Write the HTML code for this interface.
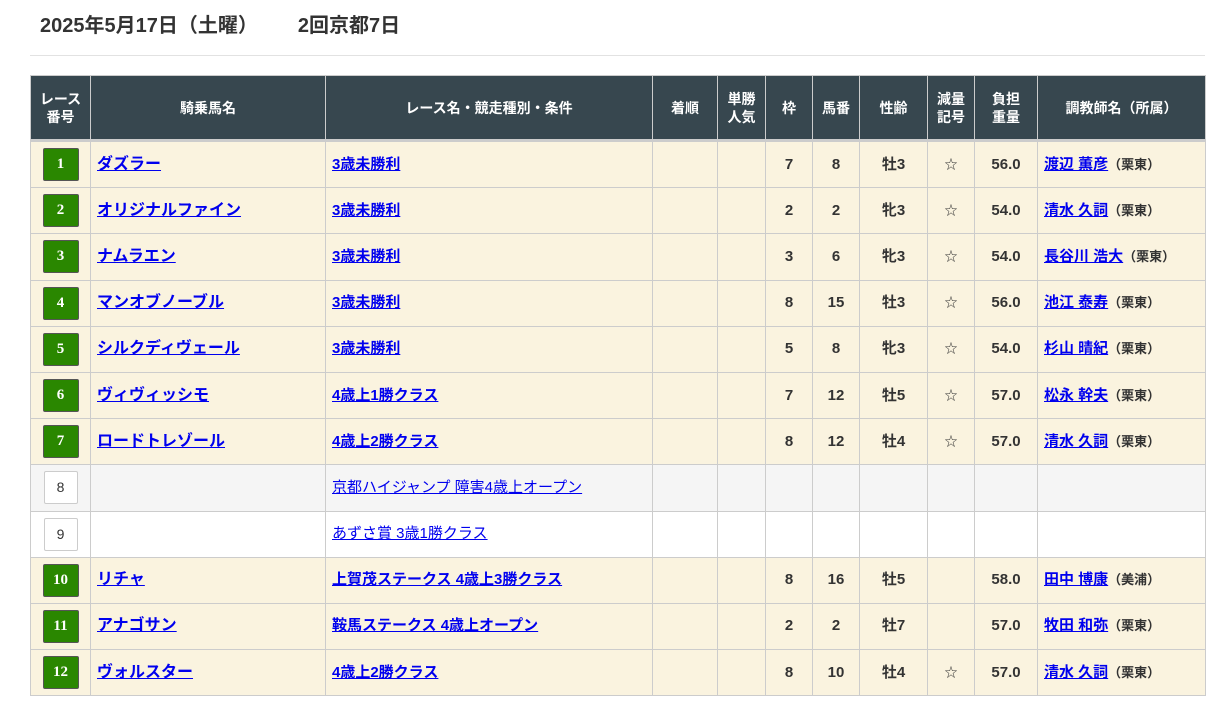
<!DOCTYPE html>
<html><head><meta charset="utf-8"><style>
body{margin:0;background:#fff;font-family:"Liberation Sans","Noto Sans CJK JP",sans-serif;color:#333;width:1222px;height:723px;overflow:hidden}
h1{position:absolute;left:40px;top:9px;margin:0;font-size:20px;font-weight:bold;color:#333;letter-spacing:0}
h1 span{margin-left:40px}
.hr{position:absolute;left:30px;top:55px;width:1175px;height:1px;background:#e2e2e2}
table{position:absolute;left:30px;top:75px;border-collapse:collapse;table-layout:fixed;width:1175px}
th{background:#37474f;color:#fff;font-size:14px;font-weight:bold;height:63px;border:1px solid #ccc;border-bottom:3px solid #ccc;line-height:18px;padding:0}
td{border:1px solid #ccc;height:45.2px;padding:0;font-size:15px;font-weight:bold;text-align:center;vertical-align:middle;background:#faf3df;line-height:20px}
td.l{text-align:left;padding-left:6px}
td.n{font-size:16px}
a{color:#0000ee;text-decoration:underline}
.b{display:inline-block;vertical-align:middle;width:34px;height:31px;line-height:31px;background:#2a8700;color:#fff;border:1px solid #555;border-radius:2px;font-family:"Liberation Serif",serif;font-size:15px}
tr.g td{background:#f5f5f5}tr.w td{background:#fff}
tr.g td,tr.w td{font-weight:normal}
.b2{display:inline-block;vertical-align:middle;width:32px;height:31px;line-height:31px;background:#fff;color:#333;border:1px solid #ccc;border-radius:2px;font-size:14px}
.s{font-size:13px}
.st{font-size:13px;font-weight:normal}
</style></head><body>
<h1>2025年5月17日（土曜）<span>2回京都7日</span></h1>
<div class="hr"></div>
<table>
<colgroup><col style="width:60px"><col style="width:235px"><col style="width:327px"><col style="width:65px"><col style="width:48px"><col style="width:47px"><col style="width:47px"><col style="width:68px"><col style="width:47px"><col style="width:63px"><col style="width:168px"></colgroup>
<tr><th>レース<br>番号</th><th>騎乗馬名</th><th>レース名・競走種別・条件</th><th>着順</th><th>単勝<br>人気</th><th>枠</th><th>馬番</th><th>性齢</th><th>減量<br>記号</th><th>負担<br>重量</th><th>調教師名（所属）</th></tr>
<tr><td><span class="b">1</span></td><td class="l n"><a>ダズラー</a></td><td class="l"><a>3歳未勝利</a></td><td></td><td></td><td>7</td><td>8</td><td>牡3</td><td class="st">☆</td><td>56.0</td><td class="l"><a>渡辺 薫彦</a><span class="s">（栗東）</span></td></tr>
<tr><td><span class="b">2</span></td><td class="l n"><a>オリジナルファイン</a></td><td class="l"><a>3歳未勝利</a></td><td></td><td></td><td>2</td><td>2</td><td>牝3</td><td class="st">☆</td><td>54.0</td><td class="l"><a>清水 久詞</a><span class="s">（栗東）</span></td></tr>
<tr><td><span class="b">3</span></td><td class="l n"><a>ナムラエン</a></td><td class="l"><a>3歳未勝利</a></td><td></td><td></td><td>3</td><td>6</td><td>牝3</td><td class="st">☆</td><td>54.0</td><td class="l"><a>長谷川 浩大</a><span class="s">（栗東）</span></td></tr>
<tr><td><span class="b">4</span></td><td class="l n"><a>マンオブノーブル</a></td><td class="l"><a>3歳未勝利</a></td><td></td><td></td><td>8</td><td>15</td><td>牡3</td><td class="st">☆</td><td>56.0</td><td class="l"><a>池江 泰寿</a><span class="s">（栗東）</span></td></tr>
<tr><td><span class="b">5</span></td><td class="l n"><a>シルクディヴェール</a></td><td class="l"><a>3歳未勝利</a></td><td></td><td></td><td>5</td><td>8</td><td>牝3</td><td class="st">☆</td><td>54.0</td><td class="l"><a>杉山 晴紀</a><span class="s">（栗東）</span></td></tr>
<tr><td><span class="b">6</span></td><td class="l n"><a>ヴィヴィッシモ</a></td><td class="l"><a>4歳上1勝クラス</a></td><td></td><td></td><td>7</td><td>12</td><td>牡5</td><td class="st">☆</td><td>57.0</td><td class="l"><a>松永 幹夫</a><span class="s">（栗東）</span></td></tr>
<tr><td><span class="b">7</span></td><td class="l n"><a>ロードトレゾール</a></td><td class="l"><a>4歳上2勝クラス</a></td><td></td><td></td><td>8</td><td>12</td><td>牡4</td><td class="st">☆</td><td>57.0</td><td class="l"><a>清水 久詞</a><span class="s">（栗東）</span></td></tr>
<tr class="g"><td><span class="b2">8</span></td><td></td><td class="l"><a>京都ハイジャンプ 障害4歳上オープン</a></td><td></td><td></td><td></td><td></td><td></td><td></td><td></td><td></td></tr>
<tr class="w"><td><span class="b2">9</span></td><td></td><td class="l"><a>あずさ賞 3歳1勝クラス</a></td><td></td><td></td><td></td><td></td><td></td><td></td><td></td><td></td></tr>
<tr><td><span class="b">10</span></td><td class="l n"><a>リチャ</a></td><td class="l"><a>上賀茂ステークス 4歳上3勝クラス</a></td><td></td><td></td><td>8</td><td>16</td><td>牡5</td><td></td><td>58.0</td><td class="l"><a>田中 博康</a><span class="s">（美浦）</span></td></tr>
<tr><td><span class="b">11</span></td><td class="l n"><a>アナゴサン</a></td><td class="l"><a>鞍馬ステークス 4歳上オープン</a></td><td></td><td></td><td>2</td><td>2</td><td>牡7</td><td></td><td>57.0</td><td class="l"><a>牧田 和弥</a><span class="s">（栗東）</span></td></tr>
<tr><td><span class="b">12</span></td><td class="l n"><a>ヴォルスター</a></td><td class="l"><a>4歳上2勝クラス</a></td><td></td><td></td><td>8</td><td>10</td><td>牡4</td><td class="st">☆</td><td>57.0</td><td class="l"><a>清水 久詞</a><span class="s">（栗東）</span></td></tr>
</table>
</body></html>
